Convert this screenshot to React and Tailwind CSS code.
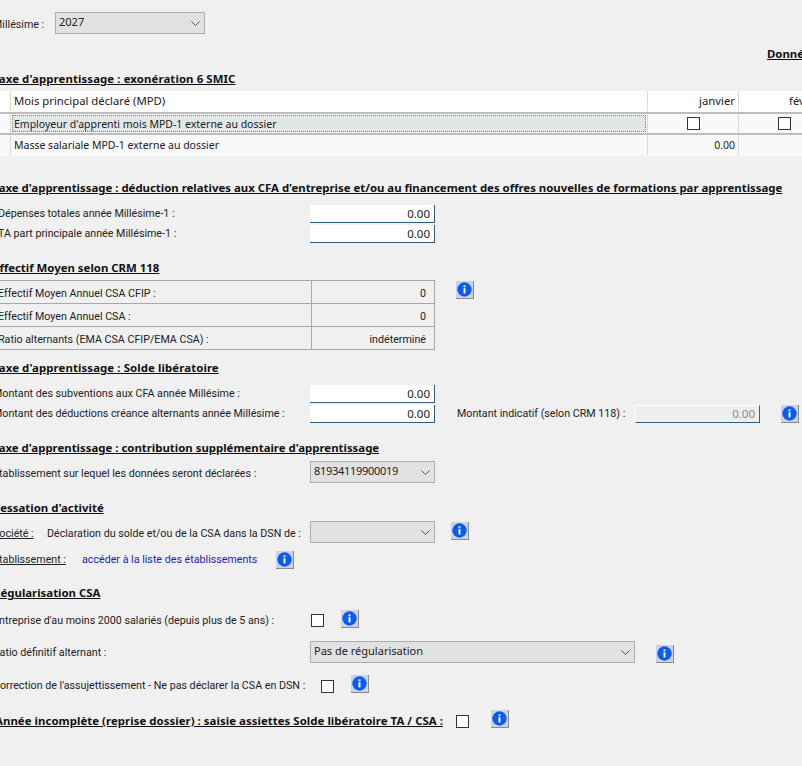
import React from 'react';

const noto = "font-['Noto_Sans','Liberation_Sans',sans-serif]";

const Heading = ({ children, className = '' }) => (
  <div className={`h-[14px] leading-[14px] text-[11.4px] font-bold underline text-[#111] whitespace-nowrap ${noto} ${className}`}>
    {children}
  </div>
);

const InfoButton = ({ className = '' }) => (
  <span className={`flex h-[18px] w-[18px] shrink-0 items-center justify-center bg-[#ccd3de] border-b border-r border-[#8a8a8a] ${className}`}>
    <svg width="15" height="15" viewBox="0 0 15 15">
      <circle cx="7.5" cy="7.5" r="7.2" fill="#0a5cf0" />
      <rect x="6.5" y="6.2" width="2" height="5.2" fill="#fff" />
      <rect x="6.5" y="3.4" width="2" height="1.8" fill="#fff" />
    </svg>
  </span>
);

const Checkbox = ({ className = '' }) => (
  <span className={`block h-[13px] w-[13px] shrink-0 bg-white border border-[#333] ${className}`} />
);

const Select = ({ value, className = '' }) => (
  <div className={`flex h-[22px] shrink-0 items-center justify-between pl-[3px] pr-[4px] bg-[#e1e1e1] border border-[#adadad] text-[11px] text-[#222] ${noto} ${className}`}>
    <span className="-mt-[3px]">{value}</span>
    <svg width="9" height="5" viewBox="0 0 9 5" fill="none" stroke="#555" strokeWidth="1">
      <path d="M0.5 0.5 L4.5 4.5 L8.5 0.5" />
    </svg>
  </div>
);

const NumberInput = ({ disabled, className = '' }) => (
  <div
    className={`flex h-[18px] w-[125px] shrink-0 items-center justify-end pr-[4px] border-b border-r border-[#2f5f7f] text-[11.5px] ${noto} ${
      disabled ? 'bg-[#eeeeee] text-[#888] border-t border-l border-t-white border-l-white' : 'bg-white text-[#222]'
    } ${className}`}
  >
    0.00
  </div>
);

const Label = ({ children, indent, className = '' }) => (
  <span className={`w-[317px] shrink-0 whitespace-nowrap text-[#222] ${indent ? 'pl-[5px]' : ''} ${className}`}>{children}</span>
);

const TableRow = ({ label, janvier, fevrier, focused, white, last }) => (
  <div className={`flex text-[#222] ${noto} ${white ? 'h-[23px] bg-white text-[11.3px] pb-[1px]' : 'h-[21px] bg-[#f9f9f9] text-[10.5px]'} ${last ? 'pb-[1px]' : 'border-b-2 border-[#bdbdbd]'}`}>
    <div className="w-[18px] shrink-0 border-r border-[#d8d8d8]" />
    <div className="flex w-[637px] shrink-0 items-center border-r border-[#d8d8d8] px-[1px] py-[1px]">
      {focused ? (
        <div className="flex h-full w-full items-center border border-dotted border-[#777] bg-[#e1e7e7] pl-[1px] pt-[1px]">{label}</div>
      ) : (
        <span className="pl-[2px]">{label}</span>
      )}
    </div>
    <div className="flex w-[91px] shrink-0 items-center justify-end border-r border-[#d8d8d8] pr-[3px]">{janvier}</div>
    <div className="flex flex-1 items-center pl-[39px]">{fevrier}</div>
  </div>
);

const EffectifRow = ({ label, value, last }) => (
  <div className={`flex h-[23px] ${last ? '' : 'border-b border-[#a8a8a8]'}`}>
    <span className="h-full w-[319px] shrink-0 whitespace-nowrap border-r border-[#a8a8a8] pl-[5px] pt-[3px] leading-[20px]">{label}</span>
    <span className="flex-1 pr-[8px] pt-[3px] text-right leading-[20px]">{value}</span>
  </div>
);

export default function App() {
  return (
    <div className="h-[766px] w-[802px] overflow-hidden bg-[#f0f0f0] text-[10.7px] leading-[18px] text-[#222] font-['Roboto','Liberation_Sans',sans-serif]">
      <div className="w-[900px] -ml-[7px] pt-[12px]">
        <div className="flex items-center">
          <span className="w-[62px] shrink-0 pt-[3px]">Millésime :</span>
          <Select value="2027" className="w-[150px]" />
        </div>
        <Heading className="mt-[13px] pl-[774px]">Données</Heading>

        <Heading className="mt-[11px] tracking-[0.1px]">Taxe d'apprentissage : exonération 6 SMIC</Heading>
        <div className="mt-[5px]">
          <TableRow white label="Mois principal déclaré (MPD)" janvier="janvier" fevrier={<span className="pl-[11px]">février</span>} />
          <TableRow
            focused
            label="Employeur d'apprenti mois MPD-1 externe au dossier"
            janvier={<Checkbox className="mr-[35px]" />}
            fevrier={<Checkbox />}
          />
          <TableRow last label="Masse salariale MPD-1 externe au dossier" janvier="0.00" fevrier="" />
        </div>

        <Heading className="mt-[25px]">
          Taxe d'apprentissage : déduction relatives aux CFA d'entreprise et/ou au financement des offres nouvelles de formations par apprentissage
        </Heading>
        <div className="mt-[10px] flex items-center">
          <Label indent>Dépenses totales année Millésime-1 :</Label>
          <NumberInput />
        </div>
        <div className="mt-[2px] flex items-center">
          <Label indent>TA part principale année Millésime-1 :</Label>
          <NumberInput />
        </div>

        <Heading className="mt-[18px]">Effectif Moyen selon CRM 118</Heading>
        <div className="mt-[5px] flex items-start">
          <div className="h-[70px] w-[442px] shrink-0 border border-l-0 border-[#a8a8a8]">
            <EffectifRow label="Effectif Moyen Annuel CSA CFIP :" value="0" />
            <EffectifRow label="Effectif Moyen Annuel CSA :" value="0" />
            <EffectifRow last label="Ratio alternants (EMA CSA CFIP/EMA CSA) :" value="indéterminé" />
          </div>
          <InfoButton className="ml-[21px] mt-[1px]" />
        </div>

        <Heading className="mt-[11px] tracking-[0.1px]">Taxe d'apprentissage : Solde libératoire</Heading>
        <div className="mt-[10px] flex items-center">
          <Label>Montant des subventions aux CFA année Millésime :</Label>
          <NumberInput />
        </div>
        <div className="mt-[2px] flex items-center">
          <Label>Montant des déductions créance alternants année Millésime :</Label>
          <NumberInput />
          <span className="ml-[22px] w-[178px] shrink-0 whitespace-nowrap">Montant indicatif (selon CRM 118) :</span>
          <NumberInput disabled />
          <InfoButton className="ml-[21px]" />
        </div>

        <Heading className="mt-[18px]">Taxe d'apprentissage : contribution supplémentaire d'apprentissage</Heading>
        <div className="mt-[6px] flex items-start">
          <Label className="pt-[4px]">Etablissement sur lequel les données seront déclarées :</Label>
          <Select value="81934119900019" className="w-[125px] tracking-[-0.3px]" />
        </div>

        <Heading className="mt-[18px]">Cessation d'activité</Heading>
        <div className="mt-[6px] flex items-start">
          <span className="w-[54px] shrink-0 pt-[4px] underline">Société :</span>
          <span className="w-[263px] shrink-0 whitespace-nowrap pt-[4px]">Déclaration du solde et/ou de la CSA dans la DSN de :</span>
          <Select value="" className="w-[125px]" />
          <InfoButton className="ml-[16px] mt-[1px]" />
        </div>
        <div className="mt-[8px] flex items-center">
          <span className="w-[89px] shrink-0 underline">Etablissement :</span>
          <span className="w-[194px] shrink-0 whitespace-nowrap text-[#1c1cb4]">accéder à la liste des établissements</span>
          <InfoButton />
        </div>

        <Heading className="mt-[17px]">Régularisation CSA</Heading>
        <div className="mt-[10px] flex h-[18px] items-start">
          <span className="w-[318px] shrink-0 whitespace-nowrap pt-[2px]">Entreprise d'au moins 2000 salariés (depuis plus de 5 ans) :</span>
          <Checkbox className="mt-[4px]" />
          <InfoButton className="ml-[17px]" />
        </div>
        <div className="mt-[13px] flex h-[22px] items-start">
          <span className="w-[317px] shrink-0 pt-[3px]">Ratio définitif alternant :</span>
          <Select value="Pas de régularisation" className="w-[325px]" />
          <InfoButton className="ml-[21px] mt-[4px]" />
        </div>
        <div className="mt-[12px] flex h-[18px] items-start">
          <span className="w-[328px] shrink-0 whitespace-nowrap pt-[2px]">Correction de l'assujettissement - Ne pas déclarer la CSA en DSN :</span>
          <Checkbox className="mt-[5px]" />
          <InfoButton className="ml-[17px]" />
        </div>
        <div className="mt-[17px] flex h-[18px] items-start">
          <Heading className="h-[18px] w-[463px] shrink-0 pl-[2px] pt-[4px] tracking-[0.05px]">Année incomplète (reprise dossier) : saisie assiettes Solde libératoire TA / CSA :</Heading>
          <Checkbox className="mt-[5px]" />
          <InfoButton className="ml-[22px]" />
        </div>
      </div>
    </div>
  );
}
